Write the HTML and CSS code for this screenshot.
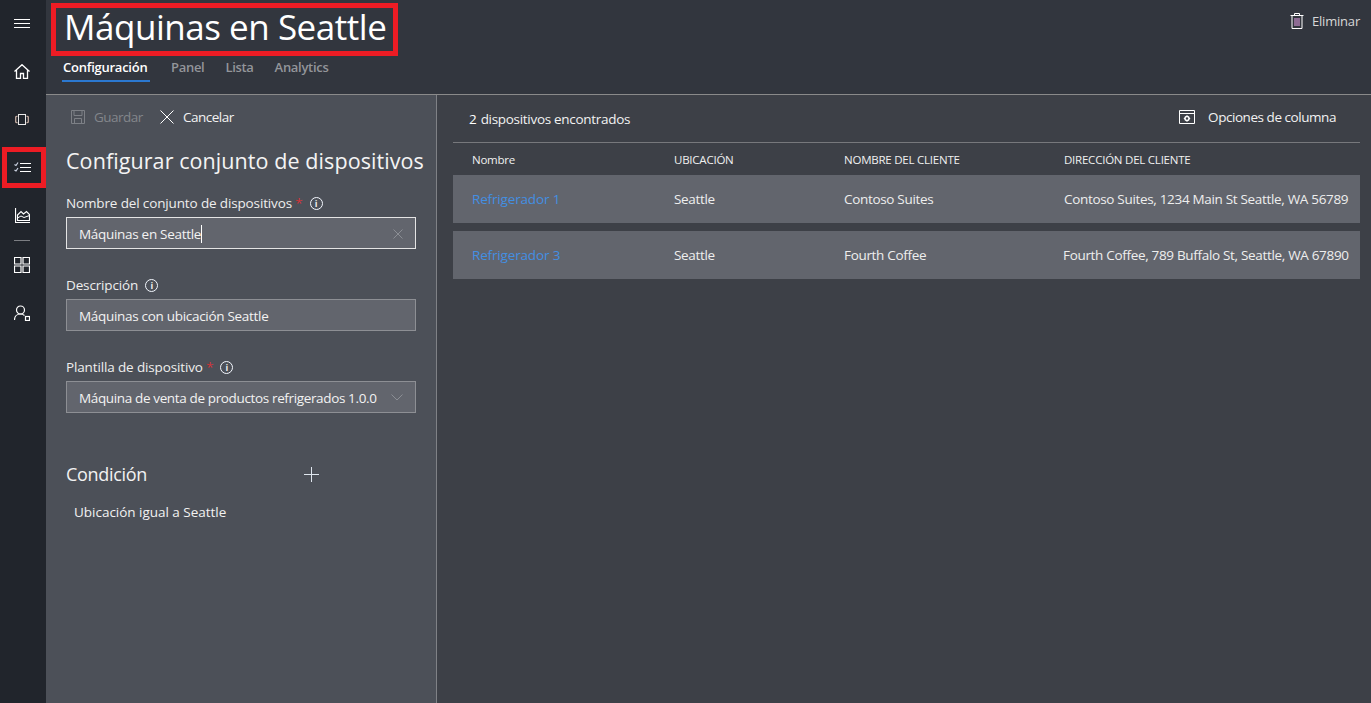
FILE: index.html
```html
<!DOCTYPE html>
<html lang="es">
<head>
<meta charset="utf-8">
<title>Máquinas en Seattle</title>
<link rel="stylesheet" href="styles.css">
</head>
<body>
<div class="app">
  <nav class="rail">
    <div class="rail-item menu"><svg width="16" height="9" viewBox="0 0 16 9"><path d="M0 .5h16M0 4.500h16M0 8.500h16" stroke="#fff" fill="none"/></svg></div>
    <div class="rail-item home"><svg width="16" height="15" viewBox="0 0 16 15"><path d="M.5 7.500 8 .7l7.500 6.800M2.500 6v8.500h4v-5h3v5h4V6" stroke="#fff" stroke-width="1.300" fill="none"/></svg></div>
    <div class="rail-item device"><svg width="14" height="11" viewBox="0 0 14 11"><rect x="3.500" y=".5" width="7" height="10" stroke="#e8e8e8" fill="none"/><path d="M2.500 2 .7 3v5l1.800 1M11.500 2l1.800 1v5l-1.800 1" stroke="#c4ada2" stroke-width="1.300" fill="none"/></svg></div>
    <div class="rail-item sets active"><svg width="17" height="12" viewBox="0 0 17 12"><path d="M6 1.500h11M6 5.500h11M6 9.500h11" stroke="#fff" stroke-width="1.200" fill="none"/><path d="M.5 2.500 2 3.500l2-3M.5 8 2 9l2-3" stroke="#cfd6e6" stroke-width="1.200" fill="none"/></svg></div>
    <div class="rail-item chart"><svg width="15" height="15" viewBox="0 0 15 15"><path d="M.5 0v14.500H15" stroke="#fff" stroke-width="1.200" fill="none"/><path d="M2.500 12.500V7L6 3.500 8.500 6l3-2.500 3 3v6z" stroke="#fff" stroke-width="1.200" fill="none"/><path d="M2.500 10 6 8l3 1.500 5.500-2" stroke="#fff" fill="none"/></svg></div>
    <div class="rail-sep"></div>
    <div class="rail-item grid"><svg width="16" height="16" viewBox="0 0 16 16"><path d="M.5.500h6.500v6.500H.5zM9 .5h6.500v6.500H9zM.5 9H7v6.500H.5zM9 9h6.500v6.500H9z" stroke="#fff" stroke-width="1.200" fill="none"/></svg></div>
    <div class="rail-item user"><svg width="16" height="16" viewBox="0 0 16 16"><circle cx="6.500" cy="5" r="4" stroke="#fff" stroke-width="1.200" fill="none"/><path d="M.5 15c0-3.500 2.500-6 6-6 1.500 0 3 .5 4 1.500" stroke="#fff" stroke-width="1.200" fill="none"/><rect x="11.500" y="11.500" width="4" height="4" stroke="#fff" stroke-width="1.200" fill="none"/></svg></div>
  </nav>
  <div class="main">
    <header class="top">
      <div class="top-left">
        <h1 class="title">Máquinas en Seattle</h1>
        <div class="tabs">
          <span class="tab current">Configuración</span>
          <span class="tab">Panel</span>
          <span class="tab">Lista</span>
          <span class="tab">Analytics</span>
        </div>
      </div>
      <div class="delete">
        <svg width="14" height="16" viewBox="0 0 14 16"><path d="M.5 2.500h13M4.500 2.500V.5h5v2M2 2.500v13h10v-13" stroke="#fff" fill="none"/><path d="M5 5v8M7 5v8M9 5v8" stroke="#e8a0e8" fill="none"/></svg>
        <span>Eliminar</span>
      </div>
    </header>
    <div class="content">
      <aside class="panel">
        <div class="actions">
          <span class="action disabled">
            <svg width="14" height="14" viewBox="0 0 14 14"><path d="M.5.500h13v13H.5zM3 .5v5h8v-5M3.500 13.500v-5h7v5" stroke="#7d8086" fill="none"/></svg>
            Guardar
          </span>
          <span class="action">
            <svg width="14" height="14" viewBox="0 0 14 14"><path d="m.5.500 13 13M13.500.5l-13 13" stroke="#fff" fill="none"/></svg>
            Cancelar
          </span>
        </div>
        <h2 class="panel-title">Configurar conjunto de dispositivos</h2>
        <div class="field first">
          <div class="label">Nombre del conjunto de dispositivos <i class="req">*</i><span class="info">i</span></div>
          <div class="input focused"><span>Máquinas en Seattle</span><b class="caret"></b>
            <svg class="end" width="10" height="10" viewBox="0 0 10 10"><path d="m.5.500 9 9M9.500.5l-9 9" stroke="#8b8e94" fill="none"/></svg>
          </div>
        </div>
        <div class="field">
          <div class="label">Descripción<span class="info">i</span></div>
          <div class="input"><span>Máquinas con ubicación Seattle</span></div>
        </div>
        <div class="field">
          <div class="label">Plantilla de dispositivo <i class="req">*</i><span class="info">i</span></div>
          <div class="input"><span class="tight">Máquina de venta de productos refrigerados 1.0.0</span>
            <svg class="end" width="12" height="7" viewBox="0 0 12 7"><path d="m.5.500 5.500 5.500L11.500.5" stroke="#8b8e94" fill="none"/></svg>
          </div>
        </div>
        <div class="condition-head">
          <h3>Condición</h3>
          <svg width="15" height="15" viewBox="0 0 15 15"><path d="M7.500 0v15M0 7.500h15" stroke="#dfe6ee" fill="none"/></svg>
        </div>
        <div class="condition">Ubicación igual a Seattle</div>
      </aside>
      <section class="results">
        <div class="results-top">
          <span class="count"><b>2</b> dispositivos encontrados</span>
          <span class="columns">
            <svg width="16" height="14" viewBox="0 0 16 14"><path d="M.5.500h15v13H.5zM.5 3.500h15" stroke="#fff" fill="none"/><circle cx="8" cy="8.500" r="2" stroke="#fff" stroke-width="1.500" fill="none"/><path d="M8 5.300v1.200M8 10.500v1.200M4.800 8.500H6M10 8.500h1.200" stroke="#fff" fill="none"/></svg>
            Opciones de columna
          </span>
        </div>
        <div class="row head"><span>Nombre</span><span>UBICACIÓN</span><span>NOMBRE DEL CLIENTE</span><span>DIRECCIÓN DEL CLIENTE</span></div>
        <div class="row item"><a>Refrigerador 1</a><span>Seattle</span><span>Contoso Suites</span><span>Contoso Suites, 1234 Main St Seattle, WA 56789</span></div>
        <div class="row item"><a>Refrigerador 3</a><span>Seattle</span><span>Fourth Coffee</span><span class="pull">Fourth Coffee, 789 Buffalo St, Seattle, WA 67890</span></div>
      </section>
    </div>
  </div>
</div>
</body>
</html>
```
FILE: styles.css
```css
* { box-sizing: border-box; }
html, body { margin: 0; height: 100%; }
body {
  font-family: "Open Sans", "Noto Sans", "Liberation Sans", sans-serif;
  font-size: 13px;
  color: #f2f2f2;
  overflow: hidden;
}
.app { display: flex; height: 703px; }

.rail {
  width: 46px;
  flex: none;
  background: #21252c;
  display: flex;
  flex-direction: column;
  align-items: flex-start;
}
.rail-item { display: flex; align-items: center; justify-content: center; width: 44px; }
.rail-item.menu { height: 9px; margin-top: 19px; }
.rail-item.home { height: 15px; margin-top: 36px; }
.rail-item.device { height: 11px; margin-top: 35px; }
.rail-item.sets { height: 41px; margin: 22px 0 0 2px; border: 5px solid #ed1c24; padding-right: 3px; }
.rail-item.chart { height: 15px; margin-top: 20px; }
.rail-sep { width: 16px; height: 1px; background: #7c7e83; margin: 17px 0 0 14px; }
.rail-item.grid { height: 16px; margin-top: 16px; }
.rail-item.user { height: 16px; margin-top: 32px; }

.main { flex: 1; display: flex; flex-direction: column; min-width: 0; }

.top {
  height: 95px;
  flex: none;
  background: #32363e;
  border-bottom: 1px solid #8a8a8a;
  display: flex;
  justify-content: space-between;
  align-items: flex-start;
}
.top-left { padding: 3px 0 0 5px; }
.title {
  margin: 0;
  width: 347px;
  height: 53px;
  border: 5px solid #ed1c24;
  font-size: 35px;
  font-weight: 400;
  line-height: 37px;
  padding-left: 8px;
  color: #fff;
  white-space: nowrap;
  letter-spacing: -.47px;
}
.tabs { display: flex; gap: 21px; margin: 2px 0 0 11px; }
.tab {
  font-size: 13px;
  font-weight: 600;
  color: #93959a;
  line-height: 18px;
  padding-bottom: 4px;
  letter-spacing: -.3px;
}
.tab.current { width: 88px; color: #fff; border-bottom: 2px solid #2b78d0; padding: 0 0 4px 1px; white-space: nowrap; letter-spacing: -.25px; }

.delete { display: flex; align-items: center; gap: 8px; margin: 13px 11px 0 0; color: #d8d8d8; font-size: 13px; letter-spacing: -.2px; line-height: 16px; }

.content { flex: 1; display: flex; min-height: 0; }

.panel {
  width: 391px;
  flex: none;
  background: #4c5058;
  border-right: 1px solid #7f8186;
  padding: 0 20px;
}
.actions { display: flex; align-items: center; gap: 17px; height: 44px; margin-left: 5px; }
.action { display: flex; align-items: center; gap: 9px; font-size: 13.500px; letter-spacing: -.5px; }
.action.disabled { color: #83868b; }
.panel-title {
  margin: 7px 0 0;
  font-size: 21.500px;
  line-height: 30px;
  font-weight: 400;
  color: #f4f4f4;
  white-space: nowrap;
  letter-spacing: .08px;
}
.field { margin-top: 25px; }
.field.first { margin-top: 16px; }
.label { display: flex; align-items: center; height: 21px; padding-top: 1px; margin-bottom: 4px; font-size: 13.500px; letter-spacing: -.14px; color: #eee; white-space: pre; }
.req { color: #d13438; font-style: normal; }
.info {
  width: 13px; height: 13px;
  margin-left: 7px;
  border: 1px solid #f4f8ff;
  border-radius: 50%;
  font-size: 9px;
  line-height: 11px;
  text-align: center;
  font-style: normal;
  font-weight: 700;
}
.input {
  height: 32px;
  width: 350px;
  background: #62656d;
  border: 1px solid #8d8f94;
  display: flex;
  align-items: center;
  padding: 1px 12px 0;
  font-size: 13.500px;
  letter-spacing: -.3px;
  white-space: nowrap;
}
.input.focused { border-color: #e4e4e4; }
.tight { letter-spacing: -.36px; }
.caret { width: 1px; height: 18px; background: #fff; }
.end { margin-left: auto; flex: none; }
.condition-head { display: flex; align-items: center; justify-content: space-between; width: 253px; margin-top: 46px; height: 30px; }
.condition-head h3 { margin: 0; font-size: 18px; font-weight: 400; letter-spacing: -.3px; }
.condition { margin: 13px 0 0 8px; font-size: 13.500px; letter-spacing: -.02px; line-height: 20px; }

.results { flex: 1; background: #3d4047; padding: 0 11px 0 16px; min-width: 0; }
.results-top {
  height: 48px;
  border-bottom: 1px solid #77787c;
  display: flex;
  justify-content: space-between;
  align-items: center;
  padding: 0 24px 0 16px;
}
.count { font-size: 13.500px; letter-spacing: -.3px; }
.count b { font-weight: 400; color: #fff; margin-right: 1px; }
.columns { display: flex; align-items: center; gap: 13px; font-size: 13.500px; letter-spacing: -.45px; margin-top: -3px; }

.row {
  display: grid;
  grid-template-columns: 202px 170px 220px 1fr;
  align-items: center;
  padding-left: 19px;
  white-space: nowrap;
}
.row.head { height: 32px; font-size: 11.500px; letter-spacing: -.23px; color: #f0f0f0; }
.row.item { height: 48px; background: #62656d; margin-bottom: 8px; font-size: 13.500px; letter-spacing: -.32px; color: #eee; }
.row a { color: #438fe2; letter-spacing: -.16px; }
.pull { margin-left: -1px; }
```
